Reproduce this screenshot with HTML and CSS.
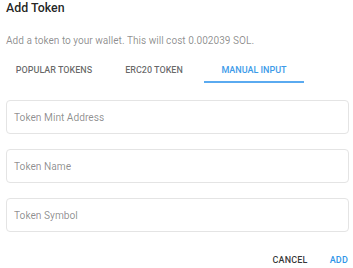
FILE: index.html
```html
<!DOCTYPE html>
<html>
<head>
<meta charset="utf-8">
<link rel="stylesheet" href="styles.css">
</head>
<body>
<div class="dialog">
  <h1 class="title">Add Token</h1>
  <p class="subtitle">Add a token to your wallet. This will cost 0.002039 SOL.</p>
  <div class="tabs">
    <div class="tab">Popular Tokens</div>
    <div class="tab">ERC20 Token</div>
    <div class="tab active">Manual Input</div>
  </div>
  <div class="fields">
    <div class="field">Token Mint Address</div>
    <div class="field">Token Name</div>
    <div class="field">Token Symbol</div>
  </div>
  <div class="actions">
    <button class="btn">Cancel</button>
    <button class="btn primary">Add</button>
  </div>
</div>
</body>
</html>
```
FILE: styles.css
```css
html, body {
  margin: 0;
  padding: 0;
  background: #fff;
}
body {
  font-family: Roboto, "Liberation Sans", sans-serif;
  width: 353px;
  height: 268px;
  overflow: hidden;
}
.dialog {
  display: flex;
  flex-direction: column;
  padding: 0 4px 0 6px;
}
.title {
  margin: 0;
  font-size: 12.4px;
  font-weight: 500;
  line-height: 16px;
  color: rgba(0, 0, 0, 0.87);
}
.subtitle {
  margin: 17px 0 0;
  font-size: 10.1px;
  line-height: 16px;
  color: rgba(0, 0, 0, 0.45);
}
.tabs {
  display: flex;
  margin: 8px 0 0 -2px;
}
.tab {
  width: 100px;
  height: 26px;
  box-sizing: border-box;
  display: flex;
  align-items: center;
  justify-content: center;
  padding-top: 1px;
  border-bottom: 2px solid transparent;
  font-size: 9px;
  font-weight: 500;
  text-transform: uppercase;
  color: rgba(0, 0, 0, 0.6);
}
.tab.active {
  color: #3d9be9;
  border-bottom-color: #5aaaf0;
}
.fields {
  display: flex;
  flex-direction: column;
  gap: 15px;
  margin-top: 17px;
}
.field {
  height: 34px;
  box-sizing: border-box;
  border: 1px solid #e4e4e4;
  border-radius: 4px;
  display: flex;
  align-items: center;
  padding-left: 7px;
  font-size: 10.2px;
  color: rgba(0, 0, 0, 0.45);
}
.actions {
  display: flex;
  justify-content: flex-end;
  margin-top: 20px;
}
.btn {
  border: 0;
  background: none;
  padding: 0 0 0 22px;
  margin: 0;
  font-family: inherit;
  font-size: 9px;
  font-weight: 500;
  letter-spacing: 0.2px;
  text-transform: uppercase;
  line-height: 16px;
  color: rgba(0, 0, 0, 0.8);
}
.btn.primary {
  color: #2f95e8;
  padding-right: 1px;
}
```
